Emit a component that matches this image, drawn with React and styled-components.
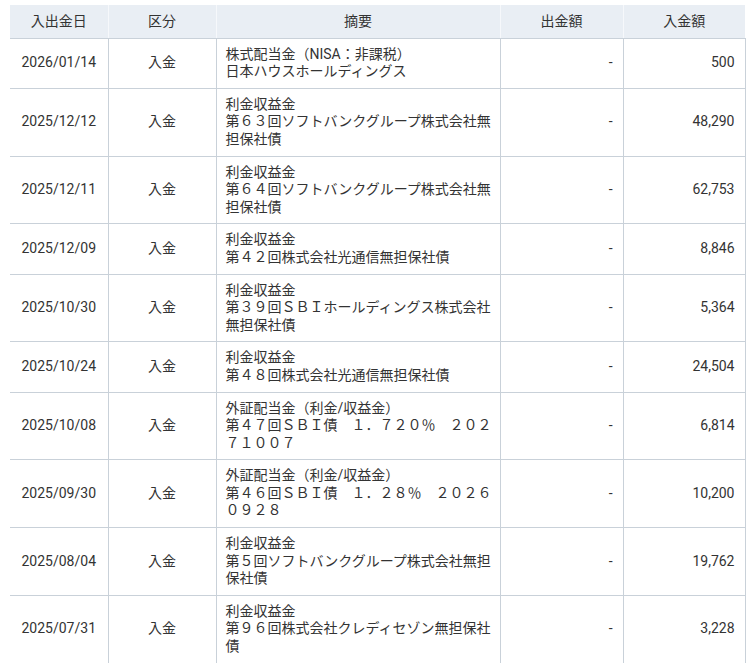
import React from "react";
import styled, { createGlobalStyle } from "styled-components";

const GlobalStyle = createGlobalStyle`
  html, body { margin: 0; padding: 0; background: #fff; }
  body {
    font-family: Roboto, "Noto Sans CJK JP", sans-serif;
    color: #333;
  }
`;

const Wrap = styled.div`
  padding: 5px 0 0 10px;
`;

const Table = styled.table`
  width: 735px;
  border-collapse: collapse;
  table-layout: fixed;
  font-size: 14px;
  line-height: 17.6px;
`;

const Col = styled.col`
  width: ${(p) => p.$w}px;
`;

const HeadCell = styled.th`
  background: #e9eef4;
  font-weight: normal;
  text-align: center;
  padding: 8px 0 7px;
  color: #333;
  border-left: 1px solid #f6f8fb;
  border-bottom: 1px solid #c9d1d9;
  &:first-child { border-left: none; }
`;

const pad = { left: "7px 4px 7px 9px", right: "7px 10px 7px 0", center: "7px 0" };

const Cell = styled.td`
  text-align: ${(p) => p.$align || "center"};
  vertical-align: middle;
  padding: ${(p) => pad[p.$align || "center"]};
  border-bottom: 1px solid #c9d1d9;
  border-left: 1px solid #c9d1d9;
  &:first-child { border-left: none; }
  &:last-child { border-right: 1px solid #c9d1d9; }
  word-break: break-all;
`;

const Line = styled.div``;

const rows = [
  ["2026/01/14", "株式配当金（NISA：非課税）", "日本ハウスホールディングス", "500"],
  ["2025/12/12", "利金収益金", "第６３回ソフトバンクグループ株式会社無担保社債", "48,290"],
  ["2025/12/11", "利金収益金", "第６４回ソフトバンクグループ株式会社無担保社債", "62,753"],
  ["2025/12/09", "利金収益金", "第４２回株式会社光通信無担保社債", "8,846"],
  ["2025/10/30", "利金収益金", "第３９回ＳＢＩホールディングス株式会社無担保社債", "5,364"],
  ["2025/10/24", "利金収益金", "第４８回株式会社光通信無担保社債", "24,504"],
  ["2025/10/08", "外証配当金（利金/収益金）", "第４７回ＳＢＩ債　１．７２０％　２０２７１００７", "6,814"],
  ["2025/09/30", "外証配当金（利金/収益金）", "第４６回ＳＢＩ債　１．２８％　２０２６０９２８", "10,200"],
  ["2025/08/04", "利金収益金", "第５回ソフトバンクグループ株式会社無担保社債", "19,762"],
  ["2025/07/31", "利金収益金", "第９６回株式会社クレディセゾン無担保社債", "3,228"],
];

export default function App() {
  return (
    <Wrap>
      <GlobalStyle />
      <Table>
        <colgroup>
          <Col $w={98} />
          <Col $w={108} />
          <Col $w={284} />
          <Col $w={123} />
          <Col $w={122} />
        </colgroup>
        <thead>
          <tr>
            <HeadCell>入出金日</HeadCell>
            <HeadCell>区分</HeadCell>
            <HeadCell>摘要</HeadCell>
            <HeadCell>出金額</HeadCell>
            <HeadCell>入金額</HeadCell>
          </tr>
        </thead>
        <tbody>
          {rows.map((r) => (
            <tr key={r[0]}>
              <Cell>{r[0]}</Cell>
              <Cell>入金</Cell>
              <Cell $align="left">
                <Line>{r[1]}</Line>
                <Line>{r[2]}</Line>
              </Cell>
              <Cell $align="right">-</Cell>
              <Cell $align="right">{r[3]}</Cell>
            </tr>
          ))}
        </tbody>
      </Table>
    </Wrap>
  );
}
